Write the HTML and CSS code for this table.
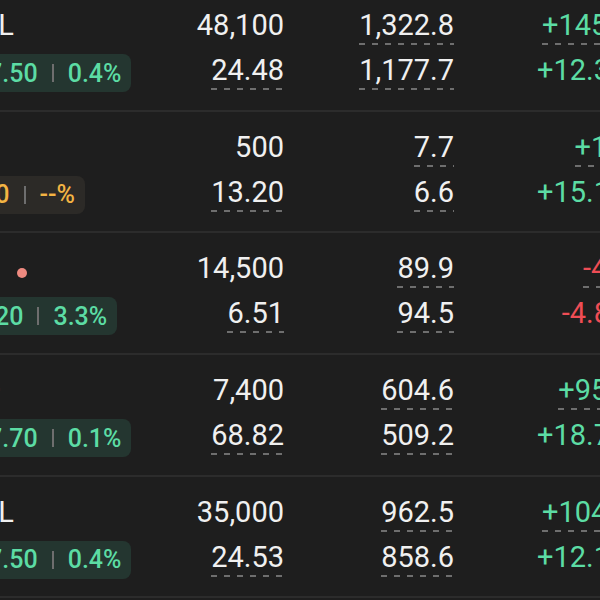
FILE: index.html
```html
<!DOCTYPE html>
<html>
<head>
<meta charset="utf-8">
<link rel="stylesheet" href="styles.css">
</head>
<body>
<div class="list">
  <div class="row">
    <div class="cell name-cell">
      <div class="line"><span class="name">FELL</span></div>
      <div class="badge up"><span>+17.50</span><i class="bar"></i><span>0.4%</span></div>
    </div>
    <div class="cell num">
      <div class="line">48,100</div>
      <div class="line"><span class="u">24.48</span></div>
    </div>
    <div class="cell num">
      <div class="line"><span class="u">1,322.8</span></div>
      <div class="line"><span class="u">1,177.7</span></div>
    </div>
    <div class="cell num up">
      <div class="line"><span class="u">+145.10</span></div>
      <div class="line">+12.32%</div>
    </div>
  </div>
  <div class="row">
    <div class="cell name-cell">
      <div class="line"><span class="name">MS</span></div>
      <div class="badge flat"><span>0.00</span><i class="bar"></i><span>--%</span></div>
    </div>
    <div class="cell num">
      <div class="line">500</div>
      <div class="line"><span class="u">13.20</span></div>
    </div>
    <div class="cell num">
      <div class="line"><span class="u">7.7</span></div>
      <div class="line"><span class="u">6.6</span></div>
    </div>
    <div class="cell num up">
      <div class="line"><span class="u">+1.10</span></div>
      <div class="line">+15.15%</div>
    </div>
  </div>
  <div class="row">
    <div class="cell name-cell">
      <div class="line"><span class="name">NV</span><i class="dot"></i></div>
      <div class="badge up"><span>+7.20</span><i class="bar"></i><span>3.3%</span></div>
    </div>
    <div class="cell num">
      <div class="line">14,500</div>
      <div class="line"><span class="u">6.51</span></div>
    </div>
    <div class="cell num">
      <div class="line"><span class="u">89.9</span></div>
      <div class="line"><span class="u">94.5</span></div>
    </div>
    <div class="cell num down">
      <div class="line"><span class="u">-4.60</span></div>
      <div class="line">-4.87%</div>
    </div>
  </div>
  <div class="row">
    <div class="cell name-cell">
      <div class="line"><span class="name">ELD</span></div>
      <div class="badge up"><span>+17.70</span><i class="bar"></i><span>0.1%</span></div>
    </div>
    <div class="cell num">
      <div class="line">7,400</div>
      <div class="line"><span class="u">68.82</span></div>
    </div>
    <div class="cell num">
      <div class="line"><span class="u">604.6</span></div>
      <div class="line"><span class="u">509.2</span></div>
    </div>
    <div class="cell num up">
      <div class="line"><span class="u">+95.40</span></div>
      <div class="line">+18.73%</div>
    </div>
  </div>
  <div class="row">
    <div class="cell name-cell">
      <div class="line"><span class="name">FELL</span></div>
      <div class="badge up"><span>+17.50</span><i class="bar"></i><span>0.4%</span></div>
    </div>
    <div class="cell num">
      <div class="line">35,000</div>
      <div class="line"><span class="u">24.53</span></div>
    </div>
    <div class="cell num">
      <div class="line"><span class="u">962.5</span></div>
      <div class="line"><span class="u">858.6</span></div>
    </div>
    <div class="cell num up">
      <div class="line"><span class="u">+104.00</span></div>
      <div class="line">+12.11%</div>
    </div>
  </div>
</div>
</body>
</html>
```

FILE: styles.css
```css
html, body {
  margin: 0;
  overflow: hidden;
  background: #1e1e1e;
}
body {
  font-family: Roboto, "Noto Sans", sans-serif;
  color: #f0f0f0;
}
.list {
  margin-left: -50px;
  margin-top: -10px;
  width: 700px;
}
.row {
  display: grid;
  grid-template-columns: 190px 144px 170px 193.6px;
  padding: 13px 0 16.7px;
  border-bottom: 2px solid #2c2c2c;
}
.line {
  height: 45px;
  line-height: 45px;
  font-size: 29px;
  white-space: nowrap;
}
.num {
  text-align: right;
}
.u {
  display: inline-block;
  line-height: 29px;
  padding-bottom: 5px;
  background: repeating-linear-gradient(90deg, #6e6e6e 0 6px, transparent 6px 13px) left bottom / 100% 2px no-repeat;
}
.up { color: #5cdca4; }
.down { color: #ee4d55; }
.name-cell .line { display: flex; align-items: center; }
.dot {
  display: inline-block;
  width: 10px;
  height: 10px;
  border-radius: 50%;
  background: #ee8a80;
  margin: 8px 0 0 28px;
}
.badge {
  display: inline-flex;
  align-items: center;
  gap: 14px;
  height: 38px;
  margin-top: 6px;
  padding: 0 10px;
  border-radius: 8px;
  font-size: 25px;
  font-weight: 500;
}
.badge.up { background: #243630; color: #5cdca4; }
.badge.flat { background: #2c2a27; color: #f3b443; }
.bar {
  display: block;
  width: 2px;
  height: 18px;
  background: #6e6e6e;
}
```
